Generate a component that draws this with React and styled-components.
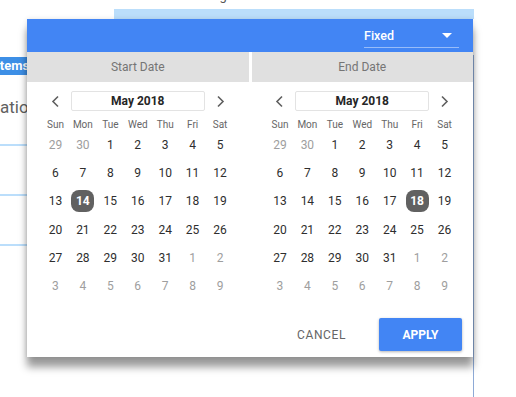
import React from 'react';
import styled, { createGlobalStyle } from 'styled-components';

const GlobalStyle = createGlobalStyle`
    html, body {
        margin: 0;
        padding: 0;
        background: #ffffff;
    }
    body {
        font-family: Roboto, "Liberation Sans", Arial, sans-serif;
    }
`;

const WEEKDAYS = ['Sun', 'Mon', 'Tue', 'Wed', 'Thu', 'Fri', 'Sat'];

// May 2018 grid, with the days that belong to April / June
const buildWeeks = () => {
    const cells = [
        { day: 29, out: true },
        { day: 30, out: true },
    ];
    for (let d = 1; d <= 31; d++) cells.push({ day: d, out: false });
    for (let d = 1; d <= 9; d++) cells.push({ day: d, out: true });
    const weeks = [];
    for (let i = 0; i < cells.length; i += 7) weeks.push(cells.slice(i, i + 7));
    return weeks;
};

const WEEKS = buildWeeks();

const Chevron = ({ dir }) => (
    <svg width="9" height="13" viewBox="0 0 9 13">
        <polyline
            points={dir === 'left' ? '7,1.5 2,6.5 7,11.5' : '2,1.5 7,6.5 2,11.5'}
            fill="none"
            stroke="#5f5f5f"
            strokeWidth="1.6"
        />
    </svg>
);

const Calendar = ({ selected }) => (
    <CalendarPanel>
        <NavRow>
            <NavButton><Chevron dir="left" /></NavButton>
            <MonthBox>May 2018</MonthBox>
            <NavButton><Chevron dir="right" /></NavButton>
        </NavRow>
        <DayGrid>
            {WEEKDAYS.map(w => <WeekdayCell key={w}>{w}</WeekdayCell>)}
            {WEEKS.map((week, wi) =>
                week.map((c, ci) => (
                    <DayCell key={wi + '-' + ci} $out={c.out}>
                        {!c.out && c.day === selected
                            ? <SelectedDay>{c.day}</SelectedDay>
                            : c.day}
                    </DayCell>
                ))
            )}
        </DayGrid>
    </CalendarPanel>
);

export default function App() {
    return (
        <Page>
            <GlobalStyle />
            <TopStrip>
                <ClippedTitle>Setting</ClippedTitle>
            </TopStrip>
            <LightBar />
            <BodyRow>
                <Sidebar>
                    <SideTab>Items:</SideTab>
                    <SideItem $first>ation</SideItem>
                    <SideItem />
                    <SideItem />
                </Sidebar>
                <Main />
            </BodyRow>

            <Popup>
                <Header>
                    <Select>
                        <span>Fixed</span>
                        <Caret />
                    </Select>
                </Header>
                <Tabs>
                    <Tab>Start Date</Tab>
                    <Tab>End Date</Tab>
                </Tabs>
                <Calendars>
                    <Calendar selected={14} />
                    <Calendar selected={18} />
                </Calendars>
                <Footer>
                    <FlatButton>Cancel</FlatButton>
                    <ApplyButton>Apply</ApplyButton>
                </Footer>
            </Popup>
        </Page>
    );
}

const Page = styled.div`
    position: relative;
    width: 516px;
    height: 397px;
    overflow: hidden;
    background: #ffffff;
`;

const TopStrip = styled.div`
    height: 9px;
    overflow: hidden;
    padding-left: 186px;
`;

const ClippedTitle = styled.div`
    font-size: 13px;
    line-height: 13px;
    margin-top: -11px;
    color: #555;
`;

const LightBar = styled.div`
    margin-left: 114px;
    width: 360px;
    height: 10px;
    background: #bbdefb;
`;

const BodyRow = styled.div`
    display: flex;
`;

const Sidebar = styled.div`
    width: 27px;
    overflow: hidden;
    padding-top: 38px;
`;

const SideTab = styled.div`
    height: 18px;
    line-height: 18px;
    margin-left: -4px;
    background: #3d8fe6;
    color: #ffffff;
    font-size: 13px;
    font-weight: 700;
    white-space: nowrap;
`;

const SideItem = styled.div`
    height: ${p => (p.$first ? '71px' : '50px')};
    padding-top: ${p => (p.$first ? '22px' : '0')};
    box-sizing: border-box;
    border-bottom: 2px solid #bbdefb;
    font-size: 17px;
    color: #616161;
    white-space: nowrap;
`;

const Main = styled.div`
    width: 446px;
    margin-top: 36px;
    height: 400px;
    border-right: 1px solid #8eaad6;
`;

const Popup = styled.div`
    position: absolute;
    left: 27px;
    top: 19px;
    width: 446px;
    background: #ffffff;
    box-shadow: 0 10px 8px rgba(0, 0, 0, 0.4), 0 0 5px rgba(0, 0, 0, 0.12);
    display: flex;
    flex-direction: column;
`;

const Header = styled.div`
    height: 33px;
    background: #4285f4;
    display: flex;
    justify-content: flex-end;
    align-items: flex-start;
    padding: 5px 14px 0 0;
    box-sizing: border-box;
`;

const Select = styled.div`
    width: 95px;
    height: 24px;
    display: flex;
    align-items: center;
    justify-content: space-between;
    padding-right: 7px;
    box-sizing: border-box;
    border-bottom: 1px solid rgba(255, 255, 255, 0.45);
    color: #ffffff;
    font-size: 12.5px;
    font-weight: 500;
`;

const Caret = styled.span`
    width: 0;
    height: 0;
    border-left: 5px solid transparent;
    border-right: 5px solid transparent;
    border-top: 5px solid #ffffff;
`;

const Tabs = styled.div`
    display: grid;
    grid-template-columns: 1fr 1fr;
    gap: 3px;
`;

const Tab = styled.div`
    height: 30px;
    background: #e0e0e0;
    display: flex;
    align-items: center;
    justify-content: center;
    font-size: 12px;
    color: #757575;
`;

const Calendars = styled.div`
    display: grid;
    grid-template-columns: 1fr 1fr;
    gap: 3px;
`;

const CalendarPanel = styled.div`
    width: 192px;
    margin: 9px auto 0;
`;

const NavRow = styled.div`
    display: grid;
    grid-template-columns: 27px 1fr 27px;
    gap: 2px;
    height: 20px;
    align-items: center;
`;

const NavButton = styled.div`
    display: flex;
    align-items: center;
    justify-content: center;
`;

const MonthBox = styled.div`
    height: 20px;
    border: 1px solid #e3e3e3;
    border-radius: 2px;
    box-sizing: border-box;
    display: flex;
    align-items: center;
    justify-content: center;
    font-size: 12px;
    font-weight: 700;
    color: #262626;
`;

const DayGrid = styled.div`
    display: grid;
    grid-template-columns: repeat(7, 1fr);
    grid-auto-rows: 28.2px;
    grid-template-rows: 14px;
    margin-top: 6px;
`;

const WeekdayCell = styled.div`
    display: flex;
    align-items: center;
    justify-content: center;
    font-size: 10px;
    color: #666666;
`;

const DayCell = styled.div`
    display: flex;
    align-items: center;
    justify-content: center;
    font-size: 12px;
    color: ${p => (p.$out ? '#9e9e9e' : '#2e2e2e')};
`;

const SelectedDay = styled.span`
    width: 23px;
    height: 22px;
    border-radius: 8px;
    background: #616161;
    color: #ffffff;
    font-weight: 700;
    display: flex;
    align-items: center;
    justify-content: center;
`;

const Footer = styled.div`
    display: flex;
    justify-content: flex-end;
    align-items: center;
    gap: 17px;
    padding: 18px 11px 6px 0;
`;

const FlatButton = styled.button`
    border: none;
    background: transparent;
    padding: 0 16px;
    height: 33px;
    font-family: inherit;
    font-size: 12px;
    font-weight: 400;
    letter-spacing: 0.6px;
    text-transform: uppercase;
    color: #666666;
`;

const ApplyButton = styled.button`
    border: none;
    width: 83px;
    height: 33px;
    border-radius: 2px;
    background: #4285f4;
    box-shadow: 0 1px 3px rgba(0, 0, 0, 0.3);
    font-family: inherit;
    font-size: 12px;
    font-weight: 700;
    text-transform: uppercase;
    color: #ffffff;
`;
